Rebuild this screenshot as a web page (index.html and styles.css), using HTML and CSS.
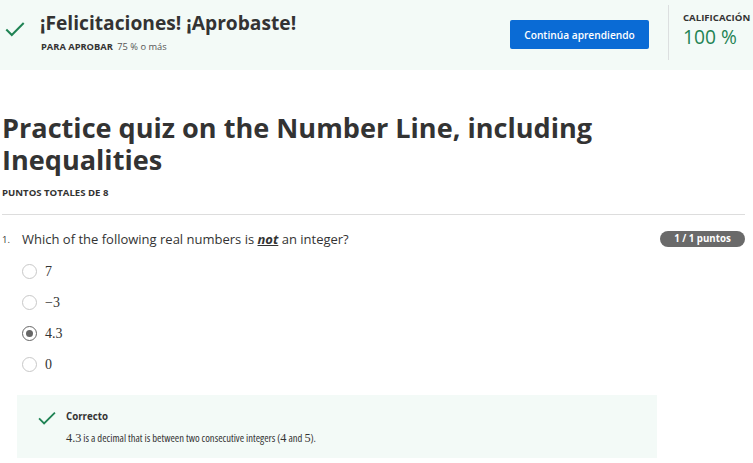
FILE: index.html
```html
<!DOCTYPE html>
<html lang="es">
<head>
<meta charset="utf-8">
<link rel="stylesheet" href="styles.css">
</head>
<body>
<header class="banner">
  <div class="banner-main">
    <svg class="check-lg" viewBox="0 0 24 24" width="22" height="22"><path d="M2.5 12.5 L8.5 18.5 L21.5 5.5" fill="none" stroke="#1f8354" stroke-width="2.2"/></svg>
    <div class="banner-text">
      <h1 class="banner-title">¡Felicitaciones! ¡Aprobaste!</h1>
      <div class="banner-sub"><span class="sub-label">PARA APROBAR</span> <span class="sub-val">75 % o más</span></div>
    </div>
  </div>
  <button class="btn">Continúa aprendiendo</button>
  <div class="grade">
    <div class="grade-label">CALIFICACIÓN</div>
    <div class="grade-val">100 %</div>
  </div>
</header>

<main class="content">
  <h2 class="quiz-title">Practice quiz on the Number Line, including Inequalities</h2>
  <div class="total">PUNTOS TOTALES DE 8</div>
  <hr class="rule">
  <section class="question">
    <div class="q-head">
      <span class="q-num">1.</span>
      <span class="q-text">Which of the following real numbers is <strong><em><u>not</u></em></strong> an integer?</span>
      <span class="badge">1 / 1 puntos</span>
    </div>
    <ul class="options">
      <li class="opt"><span class="radio"></span><span class="math">7</span></li>
      <li class="opt"><span class="radio"></span><span class="math">−3</span></li>
      <li class="opt"><span class="radio checked"></span><span class="math">4.3</span></li>
      <li class="opt"><span class="radio"></span><span class="math">0</span></li>
    </ul>
    <div class="feedback">
      <svg class="check-sm" viewBox="0 0 24 24" width="20" height="20"><path d="M2.5 12.5 L8.5 18.5 L21.5 5.5" fill="none" stroke="#1f8354" stroke-width="2.2"/></svg>
      <div class="fb-body">
        <div class="fb-title">Correcto</div>
        <div class="fb-text"><span class="math">4.3</span> is a decimal that is between two consecutive integers (<span class="math">4</span> and <span class="math">5</span>).</div>
      </div>
    </div>
  </section>
</main>
</body>
</html>
```
FILE: styles.css
```css
* { box-sizing: border-box; }
body {
  margin: 0;
  font-family: "Open Sans", "Liberation Sans", sans-serif;
  color: #333;
  background: #fff;
  width: 753px;
  overflow: hidden;
}
.banner {
  background: #f3faf7;
  height: 70px;
  display: flex;
  align-items: flex-start;
}
.banner-main {
  display: flex;
  align-items: flex-start;
  flex: 1;
  padding: 11px 0 0 4px;
}
.check-lg { margin-top: 7px; flex: none; }
.banner-text { margin-left: 14px; }
.banner-title {
  margin: 0;
  font-size: 19.2px;
  font-weight: 700;
  line-height: 24px;
  color: #333;
}
.banner-sub {
  margin-top: 6px;
  font-size: 9.3px;
  line-height: 12px;
  padding-left: 1px;
}
.sub-label { font-weight: 700; }
.sub-val { color: #555; margin-left: 2px; }
.btn {
  margin-top: 20px;
  width: 139px;
  height: 29px;
  border: none;
  border-radius: 2px;
  background: #0a6bd5;
  color: #fff;
  font-family: "Open Sans", sans-serif;
  font-size: 10.2px;
  font-weight: 600;
  padding: 0;
}
.grade {
  margin: 5px 0 0 19px;
  border-left: 1px solid #dcdfe0;
  height: 55px;
  padding: 5px 0 0 14px;
  width: 85px;
}
.grade-label {
  font-size: 9.6px;
  font-weight: 700;
  line-height: 15px;
  color: #333;
  white-space: nowrap;
}
.grade-val {
  font-size: 19.2px;
  line-height: 22px;
  color: #1f8354;
  margin-top: 1px;
}
.content { padding: 42px 8px 0 2px; }
.quiz-title {
  margin: 0;
  max-width: 620px;
  font-size: 27.1px;
  line-height: 32px;
  font-weight: 700;
  color: #333;
}
.total {
  margin-top: 11px;
  font-size: 9.6px;
  font-weight: 700;
  line-height: 12px;
}
.rule {
  margin: 15px 0 0 0;
  border: none;
  border-top: 1px solid #dddddd;
}
.question { padding-top: 16px; }
.q-head {
  display: flex;
  align-items: center;
  height: 16px;
}
.q-num { font-size: 9.5px; width: 20px; color: #333; }
.q-text { font-size: 13px; flex: 1; color: #333; }
.q-text strong { font-weight: 700; }
.badge {
  background: #6a6a6a;
  color: #fff;
  font-size: 9.7px;
  font-weight: 700;
  border-radius: 8px;
  width: 85px;
  height: 16px;
  line-height: 16px;
  text-align: center;
}
.options {
  list-style: none;
  margin: 9px 0 0 0;
  padding: 0 0 0 20px;
}
.opt {
  display: flex;
  align-items: center;
  height: 31px;
}
.radio {
  width: 15px;
  height: 15px;
  border: 1.5px solid #c8c8c8;
  border-radius: 50%;
  margin-right: 8px;
  display: flex;
  align-items: center;
  justify-content: center;
}
.radio.checked { border-color: #666; }
.radio.checked::after {
  content: "";
  width: 7px;
  height: 7px;
  border-radius: 50%;
  background: #666;
}
.math {
  font-family: "Liberation Serif", "DejaVu Serif", serif;
  font-size: 14px;
  color: #333;
}
.feedback {
  margin: 15px 0 0 15px;
  width: 640px;
  height: 63px;
  background: #f3faf7;
  display: flex;
  align-items: flex-start;
  padding: 13px 0 0 20px;
}
.check-sm { flex: none; }
.fb-body { margin-left: 9px; }
.fb-title {
  font-size: 9.7px;
  font-weight: 700;
  line-height: 14px;
  margin-top: 2px;
}
.fb-text {
  font-size: 10.6px;
  font-stretch: 75%;
  line-height: 16px;
  margin-top: 6px;
  color: #333;
}
.fb-text .math { font-size: 12.3px; }
```
